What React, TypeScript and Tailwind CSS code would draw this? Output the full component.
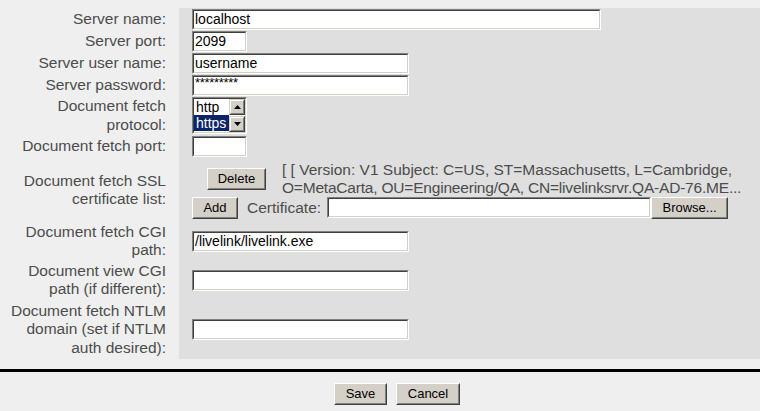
import React from 'react';

const sunken = 'border border-t-[#808080] border-l-[#808080] border-b-white border-r-white';
const sunkenInner = 'border border-t-[#404040] border-l-[#404040] border-b-[#d4d0c8] border-r-[#d4d0c8]';

function TextBox({ w, value, password }: { w: string; value?: string; password?: boolean }) {
  return (
    <div className={`${sunken} ${w} h-[21px] shrink-0`}>
      <div
        className={`${sunkenInner} h-full bg-white flex px-[1px] text-black ${
          password ? 'items-start text-[13px] leading-[11px] tracking-[-0.3px]' : 'items-center text-[14px]'
        }`}
      >
        {value}
      </div>
    </div>
  );
}

function Btn({ w, children }: { w: string; children: React.ReactNode }) {
  return (
    <div className={`${w} h-[22px] shrink-0 border border-t-white border-l-white border-b-[#404040] border-r-[#404040] bg-[#d4d0c8]`}>
      <div className="h-full border border-t-[#d4d0c8] border-l-[#d4d0c8] border-b-[#808080] border-r-[#808080] flex items-center justify-center text-[13px] text-black">
        {children}
      </div>
    </div>
  );
}

function ScrollBtn({ up }: { up?: boolean }) {
  return (
    <div className="w-[16px] h-[16px] border border-t-[#d4d0c8] border-l-[#d4d0c8] border-b-[#404040] border-r-[#404040] bg-[#d4d0c8]">
      <div className="h-full border border-t-white border-l-white border-b-[#808080] border-r-[#808080] flex items-center justify-center">
        <svg width="7" height="4" viewBox="0 0 7 4">
          {up ? <polygon points="3.5,0 7,4 0,4" fill="#000" /> : <polygon points="0,0 7,0 3.5,4" fill="#000" />}
        </svg>
      </div>
    </div>
  );
}

function Row({ h, label, children }: { h: string; label: React.ReactNode; children: React.ReactNode }) {
  return (
    <div className={`flex ${h}`}>
      <div className="w-[179px] shrink-0 flex items-center justify-end pr-[13px] text-right text-[15.5px] leading-[18.5px] text-[#4c4c4c]">
        <div>{label}</div>
      </div>
      <div className="flex-1 bg-[#dfdfdf] flex items-center pl-[13px]">{children}</div>
    </div>
  );
}

export default function App() {
  return (
    <div
      className="w-[760px] h-[411px] overflow-hidden bg-[#efefef] pt-[8px]"
      style={{ fontFamily: '"Liberation Sans", Arial, sans-serif' }}
    >
      <Row h="h-[22px]" label="Server name:">
        <TextBox w="w-[409px]" value="localhost" />
      </Row>
      <Row h="h-[22px]" label="Server port:">
        <TextBox w="w-[55px]" value="2099" />
      </Row>
      <Row h="h-[22px]" label="Server user name:">
        <TextBox w="w-[217px]" value="username" />
      </Row>
      <Row h="h-[22px]" label="Server password:">
        <TextBox w="w-[217px]" value="*********" password />
      </Row>
      <Row
        h="h-[39px]"
        label={
          <>
            Document fetch
            <br />
            protocol:
          </>
        }
      >
        <div className={`${sunken} w-[55px] h-[37px]`}>
          <div className={`${sunkenInner} h-full bg-white flex`}>
            <div className="flex-1 text-[14px] leading-[16px] text-black">
              <div className="h-[16px] px-[2px]">http</div>
              <div className="h-[16px] px-[2px] bg-[#0a246a] text-white">https</div>
            </div>
            <div className="w-[16px] flex flex-col justify-between">
              <ScrollBtn up />
              <ScrollBtn />
            </div>
          </div>
        </div>
      </Row>
      <Row h="h-[23px]" label="Document fetch port:">
        <TextBox w="w-[55px]" />
      </Row>
      <Row
        h="h-[64px]"
        label={
          <>
            Document fetch SSL
            <br />
            certificate list:
          </>
        }
      >
        <div className="flex flex-col">
          <div className="flex items-center">
            <div className="ml-[15px]">
              <Btn w="w-[59px]">Delete</Btn>
            </div>
            <div className="ml-[16px] text-[15.5px] leading-[18px] text-[#4c4c4c] whitespace-nowrap">
              <div>[ [ Version: V1 Subject: C=US, ST=Massachusetts, L=Cambridge,</div>
              <div className="tracking-[-0.2px]">O=MetaCarta, OU=Engineering/QA, CN=livelinksrvr.QA-AD-76.ME...</div>
            </div>
          </div>
          <div className="flex items-center mt-[-1px]">
            <Btn w="w-[46px]">Add</Btn>
            <span className="ml-[9px] mr-[6px] text-[15.5px] text-[#4c4c4c]">Certificate:</span>
            <TextBox w="w-[324px]" />
            <Btn w="w-[77px]">Browse...</Btn>
          </div>
        </div>
      </Row>
      <Row
        h="h-[38px]"
        label={
          <>
            Document fetch CGI
            <br />
            path:
          </>
        }
      >
        <TextBox w="w-[217px]" value="/livelink/livelink.exe" />
      </Row>
      <Row
        h="h-[40px]"
        label={
          <>
            Document view CGI
            <br />
            path (if different):
          </>
        }
      >
        <TextBox w="w-[217px]" />
      </Row>
      <Row
        h="h-[59px]"
        label={
          <>
            Document fetch NTLM
            <br />
            domain (set if NTLM
            <br />
            auth desired):
          </>
        }
      >
        <TextBox w="w-[217px]" />
      </Row>
      <div className="mt-[10px] h-[3px] bg-black" />
      <div className="flex mt-[11px] pl-[334px] gap-[9px]">
        <Btn w="w-[53px]">Save</Btn>
        <Btn w="w-[64px]">Cancel</Btn>
      </div>
    </div>
  );
}
